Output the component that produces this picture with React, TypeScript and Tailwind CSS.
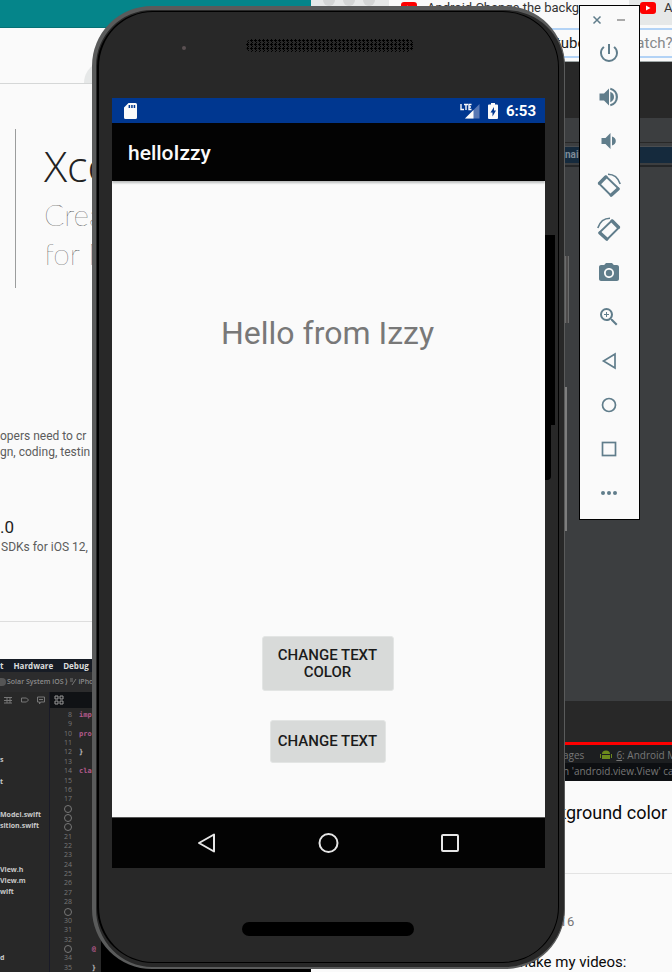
import React from "react";
import { MdPowerSettingsNew, MdCameraAlt, MdZoomIn } from "react-icons/md";

const roboto = "font-['Roboto','Liberation_Sans',sans-serif]";

const sidebarRows: Record<number, string> = {
  0: "s",
  2: "t",
  5: "Model.swift",
  6: "sition.swift",
  10: "View.h",
  11: "View.m",
  12: "wift",
  18: "d",
};

const breakpoints = [18, 19, 20, 29, 33];
const code: Record<number, string> = { 8: "imp", 10: "pro", 12: "}", 14: "cla", 33: "   @", 35: "   }" };

function XcodeWindow() {
  const lines = Array.from({ length: 28 }, (_, i) => i + 8);
  return (
    <div className="flex h-[313px] flex-none flex-col overflow-hidden bg-[#282828] font-['Open_Sans','Liberation_Sans',sans-serif]">
      <div className="flex h-[13px] flex-none items-center gap-2.5 bg-[#171c25] text-[8px] leading-3 font-bold text-[#dcdcdc]">
        <span>t</span>
        <span>Hardware</span>
        <span>Debug</span>
      </div>
      <div className="flex h-5 flex-none items-center gap-px bg-[#2c2c2d] text-[7px] leading-3 font-semibold whitespace-nowrap text-[#8b8b8b]">
        <span className="h-2 w-1.5 flex-none rounded-r bg-[#555]" />
        <span>Solar System iOS ⟩</span>
        <svg className="h-2 w-2 flex-none" viewBox="0 0 8 8" fill="none" stroke="#777">
          <path d="M1 1h3M7 1L3 7M1 3h3" />
        </svg>
        <span>iPhon</span>
      </div>
      <div className="flex min-h-0 flex-1">
        <div className="w-[50px] flex-none border-r border-[#1a1b28]">
          <div className="flex h-4 items-center justify-between pr-1 pl-1">
            <svg className="h-2 w-2" viewBox="0 0 8 8" fill="none" stroke="#777">
              <path d="M0 1.500h8M0 4.500h8M0 7h8M3 1v6M6 1v6" />
            </svg>
            <svg className="h-2 w-2" viewBox="0 0 8 8" fill="none" stroke="#777">
              <path d="M.5 2h5l2 2-2 2h-5z" />
            </svg>
            <svg className="h-2 w-2" viewBox="0 0 8 8" fill="none" stroke="#777">
              <path d="M.5 1h7v5h-4l-1 2V6h-2zM2 3.500h4" />
            </svg>
          </div>
          <ul className="pt-[46px] text-[7px] leading-[11px] font-bold whitespace-nowrap text-[#c8c8c8]">
            {Array.from({ length: 19 }, (_, i) => (
              <li key={i} className="h-[11px]">
                {sidebarRows[i]}
              </li>
            ))}
          </ul>
        </div>
        <div className="flex-1">
          <div className="flex h-4 items-center bg-[#101215] pl-1">
            <svg className="h-2.5 w-2.5" viewBox="0 0 10 10" fill="none" stroke="#999">
              <path d="M1 1h3v3H1zM6 1h3v3H6zM1 6h3v3H1zM6 6h3v3H6z" />
            </svg>
          </div>
          <div className="flex h-[264px] flex-col justify-between pt-[3px]">
            {lines.map((n) => (
              <div key={n} className="flex h-2 items-center">
                <span className="flex w-[22px] flex-none justify-end text-[7px] leading-2 text-[#777]">
                  {breakpoints.includes(n) ? (
                    <span className="h-2 w-2 rounded-full border border-[#777]" />
                  ) : (
                    n
                  )}
                </span>
                <span
                  className={`pl-[7px] font-['DejaVu_Sans_Mono',monospace] text-[7px] leading-2 font-bold whitespace-pre ${
                    code[n]?.includes("}") ? "text-[#bdbdbd]" : "text-[#b35a8c]"
                  }`}
                >
                  {code[n]}
                </span>
              </div>
            ))}
          </div>
        </div>
        <div className="w-[210px] flex-none bg-black" />
      </div>
    </div>
  );
}

function AppleWindow() {
  return (
    <section className="flex w-[311px] flex-none flex-col bg-[#fafafa]">
      <div className="h-7 flex-none border-b border-[#067175] bg-[#05858a]" />
      <div className="flex h-14 flex-none items-end border-b border-[#d5d7d7] pl-[84px]">
        <div className="h-[22px] w-16 rounded-tl-[22px] bg-[#e6e8e8]" />
      </div>
      <div className="flex h-[575px] flex-none flex-col">
        <div className="mt-[45px] ml-[15px] h-[159px] flex-none border-l border-[#9b9d9d] pl-7">
          <h1 className="pt-2 text-[43px] leading-[58px] font-light text-[#222] font-['Open_Sans',sans-serif]">
            Xco
          </h1>
          <p className="text-[30px] leading-[39px] font-thin text-[#222] font-['Lato','Open_Sans',sans-serif]">
            Crea
            <br />
            for M
          </p>
        </div>
        <p className={`mt-[140px] text-[12px] leading-4 text-[#5c5c5c] ${roboto}`}>
          opers need to cr
          <br />
          gn, coding, testin
        </p>
        <h2 className={`mt-[57px] text-[17px] leading-5 text-[#222] ${roboto}`}>.0</h2>
        <p className={`mt-0.5 pl-px text-[12px] leading-4 text-[#5c5c5c] ${roboto}`}>SDKs for iOS 12,</p>
        <hr className="mt-[66px] border-[#dedede]" />
      </div>
      <XcodeWindow />
    </section>
  );
}

function YouTubeMark() {
  return (
    <svg className="h-3 w-4 flex-none" viewBox="0 0 16 12">
      <rect width="16" height="12" rx="3" fill="#fe0000" />
      <path d="M6 3.500v5l4.500-2.500z" fill="#fff" />
    </svg>
  );
}

function YouTubeWindow() {
  return (
    <section className={`flex min-w-0 flex-1 flex-col overflow-hidden bg-[#fafafa] ${roboto}`}>
      <div className="flex h-[25px] flex-none bg-[#e6e8e8] text-[13px] leading-4 whitespace-nowrap text-[#333]">
        <div className="flex w-[78px] flex-none gap-2 pl-3">
          <span className="h-1.5 w-3 rounded-b-full bg-[#d3d5d5]" />
          <span className="h-1.5 w-3 rounded-b-full bg-[#d3d5d5]" />
          <span className="h-1.5 w-3 rounded-b-full bg-[#d3d5d5]" />
        </div>
        <div className="flex w-[240px] flex-none gap-2.5 bg-[#fafafa] pl-3">
          <span className="pt-0.5">
            <YouTubeMark />
          </span>
          <span>Android Change the backgr</span>
        </div>
        <div className="flex gap-2 pl-[11px]">
          <span className="pt-0.5">
            <YouTubeMark />
          </span>
          <span>A</span>
        </div>
      </div>
      <label className="mt-[3px] flex h-[30px] flex-none items-center border-y-2 border-[#b3d3f6] pl-[221px] text-[15px] text-[#222]">
        youtube.com
        <input
          className="w-20 min-w-0 flex-none bg-transparent text-[#85888a] outline-none"
          defaultValue="/watch?v"
          aria-label="Address"
        />
      </label>
      <div className="mt-[3px] flex h-[720px] flex-none flex-col bg-[#3c3e40]">
        <div className="h-[57px] flex-none border-t border-[#a0a8a8] bg-[#282828]" />
        <div className="mt-6 h-px flex-none bg-[#282828]" />
        <div className="mt-[3px] h-[17px] flex-none border-t border-[#4a4d50] bg-[#152a3d] pl-[254px] text-[10px] leading-4 font-bold text-[#7e8b96]">
          nai
        </div>
        <div className="mt-0.5 h-0.5 flex-none bg-[#242628]" />
        <div className="flex-1" />
        <div className="h-[41px] flex-none bg-[#282828]" />
        <div className="h-[3px] flex-none bg-[#fe0000]" />
        <div className="flex h-9 flex-none flex-col bg-[#0d0f12] font-['Open_Sans',sans-serif] text-[10px] leading-4 whitespace-nowrap text-[#777]">
          <div className="flex items-center bg-[#1c1e20] pt-0.5 pl-[252px]">
            <span>ages</span>
            <svg className="mr-1 ml-4 h-2.5 w-3 flex-none" viewBox="0 0 12 10" fill="#6c8a1c">
              <path d="M2 4a4 3.500 0 0 1 8 0zM2 5h8v4H2zM0 4h1v4H0zM11 4h1v4h-1z" />
            </svg>
            <span>
              <u>6</u>: Android M
            </span>
          </div>
          <div className="pl-[252px]">n 'android.view.View' ca</div>
        </div>
      </div>
      <h2 className="mt-5 pl-[246px] text-[18px] leading-6 whitespace-nowrap text-[#0a0a0a]">
        kground color
      </h2>
      <hr className="mt-12 border-[#e3e3e3]" />
      <p className="mt-10 pl-[234px] text-[13px] leading-4 text-[#757575]">2016</p>
      <p className="mt-6 pl-[196px] text-[15px] leading-4 whitespace-nowrap text-[#0a0a0a]">
        I make my videos:
      </p>
    </section>
  );
}

function StatusBar() {
  return (
    <div className="flex h-[25px] flex-none items-center bg-[#003790] pr-[9px] pl-3 text-white">
      <svg className="h-4 w-[13px]" viewBox="0 0 13 16" fill="#fafafa">
        <path
          fillRule="evenodd"
          d="M4.500 0H11.500Q13 0 13 1.500V14.500Q13 16 11.500 16H1.500Q0 16 0 14.500V4.500zM4.600 2v3h1.500V2zM7.200 2v3h1.500V2zM9.700 2v3h1.500V2z"
        />
      </svg>
      <svg className="ml-auto h-4 w-5" viewBox="0 0 20 16">
        <path d="M19.500 1v14.500H5z" fill="#5878b4" />
        <path d="M13.500 7v8.500H5z" fill="#fafafa" />
        <path
          d="M1 1v5.500h3M4 1.500h4M6 1.500V7M11.500 1.500H9v5h2.500M9 4h2"
          fill="none"
          stroke="#fafafa"
          strokeWidth="1.400"
        />
      </svg>
      <svg className="ml-2 h-4 w-2.5" viewBox="0 0 10 16">
        <path d="M3 0h4v1.500h2q1 0 1 1V15q0 1-1 1H1q-1 0-1-1V2.500q0-1 1-1h2z" fill="#fafafa" />
        <path d="M6 4L2.500 9.500h2V13.500L8 7.500H6z" fill="#003790" />
      </svg>
      <span className="ml-2 text-[15px] leading-5 font-bold">6:53</span>
    </div>
  );
}

const appButton =
  "rounded-[3px] border border-[#e3e5e4] bg-[#d8dad9] text-[15px] leading-[17px] font-medium text-[#1b1b1b]";

function Phone() {
  return (
    <section
      className={`absolute top-1.5 left-[92px] h-[963px] w-[473px] rounded-[60px] border-t-4 border-r border-b-2 border-l-4 border-[#5a5b5b] bg-[#282828] ${roboto}`}
    >
      <span className="absolute top-[246px] -right-[5px] h-[67px] w-1 border-x border-[#6b6b6b] bg-[#4d4b4b]" />
      <span className="absolute top-[377px] -right-[3px] h-36 w-0.5 bg-[#7e7e7e]" />
      <span className="absolute top-[225px] right-[9px] h-[190px] w-2.5 bg-black" />
      <span className="absolute top-[415px] right-[13px] h-[55px] w-1.5 rounded-br bg-black" />
      <div className="mt-px ml-px flex h-[952px] w-[462px] flex-col rounded-[56px] border border-l-2 border-black pl-[13px]">
        <div className="relative h-[86px] flex-none">
          <span className="absolute top-[34px] left-[70px] size-1 rounded-full bg-[#5a5052]" />
          <svg className="absolute top-[27px] left-[134px] h-[13px] w-[168px]">
            <defs>
              <pattern id="mesh" width="4" height="4" patternUnits="userSpaceOnUse">
                <path d="M0 1h3v1H0zM1 0h1v3H1zM2 3h1v1H2z" fill="#000" />
              </pattern>
            </defs>
            <rect width="168" height="13" rx="6" fill="url(#mesh)" />
          </svg>
        </div>
        <div className="flex h-[770px] w-[433px] flex-none flex-col overflow-hidden bg-[#fafafa]">
          <StatusBar />
          <header className="flex h-[58px] flex-none items-center bg-[#030303] pt-0.5 pl-4 shadow-[0_2px_2px_#bbbdbd]">
            <h1 className="text-[21px] leading-6 font-medium text-[#fafafa]">helloIzzy</h1>
          </header>
          <main className="flex flex-1 flex-col items-center pr-0.5">
            <p className="mt-[134px] text-[32px] leading-9 text-[#787878]">Hello from Izzy</p>
            <button className={`mt-[285px] h-[55px] w-[132px] ${appButton}`}>
              CHANGE TEXT
              <br />
              COLOR
            </button>
            <button className={`mt-[29px] h-[43px] w-[116px] ${appButton}`}>CHANGE TEXT</button>
          </main>
          <nav className="flex h-[51px] flex-none items-center justify-between border-t border-[#555] bg-[#030303] px-[83px]">
            <button aria-label="Back">
              <svg className="size-6" viewBox="0 0 24 24" fill="none" stroke="#e6e6e6" strokeWidth="2">
                <path d="M19 3.500v17L4 12z" strokeLinejoin="round" />
              </svg>
            </button>
            <button aria-label="Home">
              <svg className="size-6" viewBox="0 0 24 24" fill="none" stroke="#e6e6e6" strokeWidth="2">
                <circle cx="11.500" cy="12" r="9" />
              </svg>
            </button>
            <button aria-label="Overview">
              <svg className="size-6" viewBox="0 0 24 24" fill="none" stroke="#e6e6e6" strokeWidth="2">
                <rect x="4" y="4" width="16" height="16" rx="1" />
              </svg>
            </button>
          </nav>
        </div>
        <div className="mt-[54px] ml-[130px] h-3.5 w-[172px] flex-none rounded-full bg-black" />
      </div>
    </section>
  );
}

function Rotate({ mirrored = false }: { mirrored?: boolean }) {
  return (
    <svg className="size-6" viewBox="0 0 24 24" fill="none" stroke="currentColor">
      <g transform={mirrored ? "matrix(-1 0 0 1 24 0)" : undefined}>
        <path d="M9 3.500L2 10.500L14 22.500L21.500 15.500z" strokeWidth="1.800" strokeLinejoin="round" />
        <path d="M8.800 4L2.600 10.200M21 16L14.300 22" strokeWidth="3.400" strokeLinecap="round" />
        <path d="M11 1.200Q20 1.200 23.200 11" strokeWidth="1.600" />
      </g>
    </svg>
  );
}

const outline = (shape: React.ReactNode) => (
  <svg className="size-6" viewBox="0 0 24 24" fill="none" stroke="currentColor" strokeWidth="1.700">
    {shape}
  </svg>
);

const filled = (shape: React.ReactNode) => (
  <svg className="size-6" viewBox="0 0 24 24" fill="currentColor">
    {shape}
  </svg>
);

const tools: { label: string; icon: React.ReactNode }[] = [
  { label: "Power", icon: <MdPowerSettingsNew className="size-6" /> },
  {
    label: "Volume up",
    icon: filled(
      <>
        <path d="M2.500 8.500v7h4.500l5 5v-17l-5 5zM13.300 6.800q3.700 1.600 3.700 5.200t-3.700 5.200z" />
        <path d="M13.300 3.800a8.400 8.400 0 0 1 0 16.400" fill="none" stroke="currentColor" strokeWidth="2.200" />
      </>,
    ),
  },
  {
    label: "Volume down",
    icon: filled(<path d="M4.500 9v6h4l5 5V4l-5 5zM15 7.500q3.800 1.200 3.800 4.500t-3.800 4.500z" />),
  },
  { label: "Rotate left", icon: <Rotate /> },
  { label: "Rotate right", icon: <Rotate mirrored /> },
  { label: "Take screenshot", icon: <MdCameraAlt className="size-6" /> },
  { label: "Zoom", icon: <MdZoomIn className="size-6" /> },
  { label: "Back", icon: outline(<path d="M18 5v14L6.500 12z" />) },
  { label: "Home", icon: outline(<circle cx="12" cy="12" r="6.500" />) },
  { label: "Overview", icon: outline(<rect x="5.500" y="5.500" width="13" height="13" />) },
  {
    label: "More",
    icon: filled(
      <>
        <circle cx="6" cy="12" r="2" />
        <circle cx="12" cy="12" r="2" />
        <circle cx="18" cy="12" r="2" />
      </>,
    ),
  },
];

function EmulatorToolbar() {
  return (
    <aside className="absolute top-[5px] left-[579px] flex h-[515px] w-[61px] flex-col items-center border border-black bg-[#fafafa] pr-px text-[#607d8b]">
      <div className="flex h-[25px] w-full flex-none items-center justify-between px-3 pt-0.5">
        <button aria-label="Close">
          <svg className="size-2.5" viewBox="0 0 10 10" stroke="currentColor" strokeWidth="1.500">
            <path d="M1.500 1.500l7 7M8.500 1.500l-7 7" />
          </svg>
        </button>
        <button aria-label="Minimize">
          <svg className="size-2.5" viewBox="0 0 10 10" stroke="#aaa" strokeWidth="2">
            <path d="M1 5h8" />
          </svg>
        </button>
      </div>
      {tools.map((t) => (
        <button key={t.label} aria-label={t.label} className="flex h-11 w-11 flex-none items-center justify-center">
          {t.icon}
        </button>
      ))}
    </aside>
  );
}

export default function App() {
  return (
    <div className="relative flex h-screen overflow-hidden bg-[#fafafa]">
      <AppleWindow />
      <YouTubeWindow />
      <Phone />
      <EmulatorToolbar />
    </div>
  );
}
